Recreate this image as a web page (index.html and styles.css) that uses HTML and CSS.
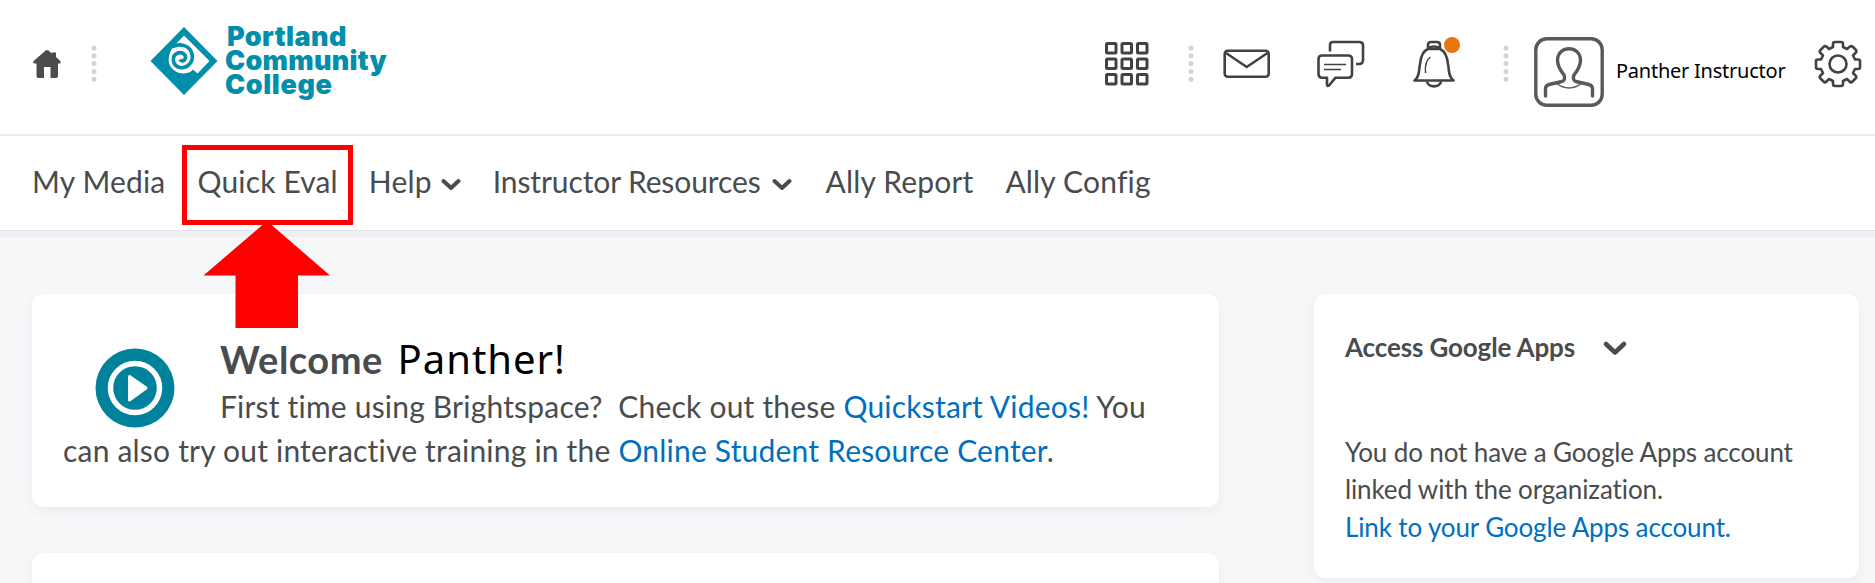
FILE: index.html
```html
<!DOCTYPE html>
<html lang="en">
<head>
  <meta charset="UTF-8" />
  <meta name="viewport" content="width=device-width, initial-scale=1.0" />
  <title>Homepage - Portland Community College</title>
  <link rel="stylesheet" href="styles.css">
</head>
<body>
  <header class="header">
    <a class="home" href="#" aria-label="Home">
      <svg width="30" height="30" viewBox="0 0 30 30"><path fill="#494c4e" d="M13.6 1.4 Q15 .4 16.4 1.4 L20 4.5 V3.6 H24 V8 L28.3 12 Q29.5 14 28 14.5 H26 V27 Q26 29 24 29 H18.5 V18 H12 V29 H6.5 Q4.5 29 4.5 27 V14.5 H2 Q.5 14 1.7 12 Z"/></svg>
    </a>
    <svg class="dots" width="6" height="38" viewBox="0 0 6 38"><path d="M3 3v32.5"/></svg>
    <a class="logo" href="#">
      <svg width="68" height="70" viewBox="0 0 68 70">
        <path fill="#008eaa" d="M34 1 L67.5 35 L34 69 L.5 35 Z"/>
        <path fill="#fff" d="M34 9.5 L59.5 35 L47.5 47.5 L43 43.5 C41 46 40 46 37 47 C29 49 21 44 19 37 C18 30 20 25 24 20 Z"/>
        <path fill="none" stroke="#008eaa" stroke-width="3.6" d="M22 21 C30 16.5 40 19.5 42 28 C44 36 37 43 30 41.5 C22 39.5 21 29.5 28 27 C33 25.5 37 29.5 35 33 C34 35.5 31 35.5 30 33.5"/>
      </svg>
      <span class="logo-text">
        <span class="l1">Portland</span>
        <span class="l2">Community</span>
        <span class="l3">College</span>
      </span>
    </a>
    <div class="tools">
      <svg class="ico apps" width="46" height="46" viewBox="0 0 46 46">
        <g stroke-width="3"><rect x="2.5" y="2.5" width="9.5" height="9.5" rx="1"/><rect x="18" y="2.5" width="9.5" height="9.5" rx="1"/><rect x="33.5" y="2.5" width="9.5" height="9.5" rx="1"/><rect x="2.5" y="18" width="9.5" height="9.5" rx="1"/><rect x="18" y="18" width="9.5" height="9.5" rx="1"/><rect x="33.5" y="18" width="9.5" height="9.5" rx="1"/><rect x="2.5" y="33.5" width="9.5" height="9.5" rx="1"/><rect x="18" y="33.5" width="9.5" height="9.5" rx="1"/><rect x="33.5" y="33.5" width="9.5" height="9.5" rx="1"/></g>
      </svg>
      <svg class="dots" width="6" height="38" viewBox="0 0 6 38"><path d="M3 3v32.5"/></svg>
      <svg class="ico mail" width="48" height="48" viewBox="0 0 48 48"><rect x="1.7" y="10.7" width="44" height="26" rx="3"/><path d="M3 13 L23.7 27 L44.5 13"/></svg>
      <svg class="ico chat" width="48" height="48" viewBox="0 0 48 48"><path d="M13 11.5 V5 Q13 2 16 2 H42 Q46 2 46 5 V20 Q46 24 42 24 H39"/><path d="M5 15.5 H31 Q35 15.5 35 19 V34 Q35 37.7 31 37.7 H18.5 L12 45.5 Q10 46.5 10 44.5 V37.7 H5 Q1.5 37.7 1.5 34 V19 Q1.5 15.5 5 15.5Z"/><path stroke-width="1.5" d="M7 24.5H29M7 29.5H24"/></svg>
      <span class="bell">
        <svg class="ico" width="42" height="48" viewBox="0 0 42 48"><path d="M1.5 40.5 C7 36 5.5 31 7 24 C8 15 11 10.5 15 9 H27 C31 10.5 34 15 35 24 C36.5 31 35 36 40.5 40.5 Z"/><path d="M15 9 V5 Q15 2 18 2 H24 Q27 2 27 5 V9 M15 8 Q21 5 27 8 M14 41.5 C15 48 27 48 28 41.5"/><path stroke-width="1.5" d="M17.5 17 Q11.5 21 12.5 33"/></svg>
        <i class="badge"></i>
      </span>
      <svg class="dots" width="6" height="38" viewBox="0 0 6 38"><path d="M3 3v32.5"/></svg>
      <a class="user" href="#">
        <svg class="avatar" width="70" height="70" viewBox="0 0 70 70"><rect x="1.8" y="1.8" width="66.4" height="66.4" rx="11"/><path d="M11.5 59 V52 Q11.5 48.5 15 47.5 L28 44.5 Q32 43 30 38 C26 33 23.5 28 23.5 23 C24 8 46 8 46.5 23 C46.5 28 44 33 40 38 Q38 43 42 44.5 L55 47.5 Q58.5 48.5 58.5 52 V59"/><path stroke-width="1.5" d="M22 46 Q35 56 48 46"/></svg>
        <span>Panther Instructor</span>
      </a>
      <svg class="ico gear" width="48" height="48" viewBox="0 0 48 48"><circle cx="24" cy="24" r="8.5"/><path d="M19 4 Q19 2 21 2 H27 Q29 2 29 4 V7 L33 9 L36 6.5 Q37.5 5.5 39 7 L42 10 Q43 11.5 41.5 13 L39 15.5 L41 19.5 H44 Q46 19.5 46 21 V27 Q46 29 44 29 H41 L39 33 L41.5 35.5 Q43 37 41.5 38.5 L38.5 41.5 Q37 43 35.5 41.5 L33 39 L29 41 V44 Q29 46 27 46 H21 Q19 46 19 44 V41 L15 39 L12.5 41.5 Q11 43 9.5 41.5 L6.5 38.5 Q5 37 6.5 35.5 L9 33 L7 29 H4 Q2 29 2 27 V21 Q2 19.5 4 19.5 H7 L9 15.5 L6.5 13 Q5 11.5 6.5 10 L9.5 7 Q11 5.5 12.5 6.5 L15 9 L19 7 Z"/></svg>
    </div>
  </header>

  <nav class="nav">
    <a class="media" href="#">My Media</a>
    <a class="quick-eval" href="#">Quick Eval
      <span class="highlight"></span>
      <svg class="arrow" width="128" height="107" viewBox="0 0 128 107"><path fill="#f00" d="M64 0 L127 54.5 H95 V107 H32.5 V54.5 H.5 Z"/></svg>
    </a>
    <a class="help" href="#">Help <svg class="chevron" width="20" height="13" viewBox="0 0 20 13"><path d="M2.5 3l7.5 7 7.5-7"/></svg></a>
    <a class="resources" href="#">Instructor Resources <svg class="chevron" width="20" height="13" viewBox="0 0 20 13"><path d="M2.5 3l7.5 7 7.5-7"/></svg></a>
    <a class="report" href="#">Ally Report</a>
    <a class="config" href="#">Ally Config</a>
  </nav>

  <main class="main">
    <div class="left">
      <section class="card welcome">
        <svg class="play" width="80" height="80" viewBox="0 0 80 80"><circle cx="40" cy="40" r="39.5" fill="#00819c"/><circle cx="40" cy="40" r="24.5" fill="none" stroke="#fff" stroke-width="5.5"/><path fill="#fff" stroke="#fff" stroke-width="3" stroke-linejoin="round" d="M34.5 28.5 L51 40 L34.5 52 Z"/></svg>
        <h1>Welcome <span>Panther!</span></h1>
        <p class="line1">First time using Brightspace?&nbsp; Check out these <a href="#">Quickstart Videos!</a> You</p>
        <p class="line2">can also try out interactive training in the <a href="#">Online Student Resource Center</a>.</p>
      </section>
      <section class="card next"></section>
    </div>
    <aside class="card google">
      <h2>Access Google Apps <svg class="chevron" width="24" height="15" viewBox="0 0 24 15"><path d="M3 3l9 8.5 9-8.5"/></svg></h2>
      <p>You do not have a Google Apps account<br>linked with the organization.<br><a href="#">Link to your Google Apps account.</a></p>
    </aside>
  </main>
</body>
</html>
```
FILE: styles.css
```css
* {
  box-sizing: border-box;
}
body {
  margin: 0;
  height: 583px;
  overflow: hidden;
  background: #f6f7f9;
  color: #494c4e;
  font-family: Lato, sans-serif;
  font-variant-ligatures: none;
}
a {
  color: inherit;
  text-decoration: none;
}
svg {
  display: block;
  flex: none;
}
h1, h2, p {
  margin: 0;
}
.header {
  height: 136px;
  padding-left: 32px;
  display: flex;
  align-items: flex-start;
  background: #fff;
  border-bottom: 2px solid #ebebeb;
}
.home {
  margin-top: 49px;
}
.dots {
  margin-top: 45px;
  fill: none;
  stroke: #cdd5dc;
  stroke-width: 5;
  stroke-linecap: round;
  stroke-dasharray: 0 7.8;
}
.home + .dots {
  margin-left: 29px;
}
.logo {
  display: flex;
  margin: 26px 0 0 53px;
}
.logo-text {
  margin: -1px 0 0 7px;
  display: flex;
  flex-direction: column;
  color: #008eaa;
  font: 900 27px/24px Inter, sans-serif;
}
.l1 {
  padding-left: 2px;
  letter-spacing: 0.4px;
}
.l2 {
  letter-spacing: 0.25px;
}
.l3 {
  letter-spacing: 0.6px;
}
.tools {
  display: flex;
  align-items: flex-start;
  margin-left: auto;
  padding-right: 13px;
}
.ico {
  fill: none;
  stroke: #3f4345;
  stroke-width: 2.6;
  stroke-linejoin: round;
}
.apps {
  margin: 41px 38px 0 0;
}
.mail {
  margin: 40px 46px 0 29px;
}
.chat {
  margin-top: 40px;
}
.bell {
  position: relative;
  margin: 40px 48px 0 48px;
}
.badge {
  position: absolute;
  top: -3px;
  right: -5px;
  width: 16px;
  height: 16px;
  border-radius: 50%;
  background: #e87511;
}
.user {
  display: flex;
  width: 305px;
  padding: 37px 0 0 25px;
  color: #000;
  font: 20px/67px "Noto Sans", sans-serif;
  letter-spacing: -0.24px;
  white-space: nowrap;
}
.user span {
  margin-left: 12px;
}
.avatar {
  fill: none;
  stroke: #565a5c;
  stroke-width: 3.4;
  stroke-linecap: round;
}
.gear {
  margin-top: 40px;
}
.nav {
  height: 94px;
  padding-left: 32px;
  display: flex;
  gap: 32px;
  background: #fff;
  box-shadow: 0 1px 0 #e3e5ea, 0 7px 0 #eff0f3;
  font-size: 30px;
  line-height: 90px;
  letter-spacing: 0.17px;
  white-space: nowrap;
}
.nav a {
  display: flex;
  position: relative;
}
.nav .help {
  margin-left: -1px;
}
.nav .resources {
  letter-spacing: -0.1px;
}
.chevron {
  fill: none;
  stroke: #494c4e;
  stroke-width: 4;
  stroke-linecap: round;
  stroke-linejoin: round;
}
.nav .chevron {
  margin: 42px 0 0 11px;
}
.nav .help .chevron {
  margin-left: 9px;
}
.nav .report {
  margin-left: 2px;
}
/* red callout around Quick Eval */
.highlight {
  position: absolute;
  left: -15px;
  top: 9px;
  width: 171px;
  height: 80px;
  border: 5px solid #f00;
}
.arrow {
  position: absolute;
  left: 6px;
  top: 85px;
}
.main {
  padding: 64px 16px 0 32px;
  display: flex;
  justify-content: space-between;
  align-items: flex-start;
}
.left {
  width: 1187px;
}
.card {
  background: #fff;
  border-radius: 12px;
  box-shadow: 0 4px 12px rgba(73, 76, 78, 0.06);
}
.welcome {
  height: 213px;
  padding: 42px 31px 0;
  font-size: 30px;
  line-height: 44px;
  letter-spacing: 0.2px;
  white-space: nowrap;
}
.play {
  float: left;
  margin: 12px 45px 0 32px;
}
.welcome h1 {
  margin-bottom: 2px;
  font-size: 38px;
  line-height: 46px;
  letter-spacing: 0.5px;
}
.welcome h1 span {
  margin-left: 5px;
  color: #000;
  font: 40px/46px "Noto Sans", sans-serif;
  letter-spacing: 1px;
}
.line2 {
  clear: left;
}
.welcome p a, .google p a {
  color: #006fbf;
}
.next {
  height: 30px;
  margin-top: 46px;
  border-radius: 12px 12px 0 0;
}
.google {
  width: 545px;
  height: 284px;
  padding: 35px 31px 0;
  font-size: 26px;
  line-height: 37.5px;
  letter-spacing: -0.13px;
  white-space: nowrap;
}
.google h2 {
  display: flex;
  margin-bottom: 67px;
  font-size: 26px;
  line-height: 37.5px;
}
.google .chevron {
  margin: 12px 0 0 28px;
  stroke-width: 4.5;
}
```
